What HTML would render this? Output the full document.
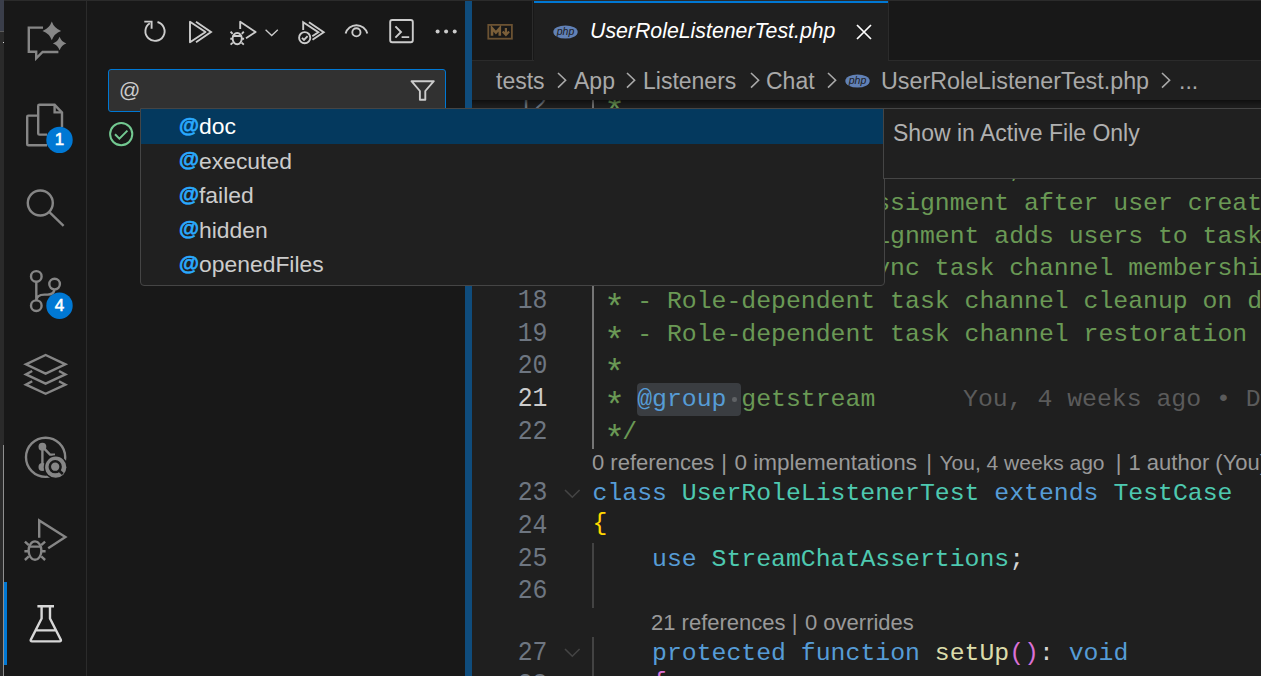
<!DOCTYPE html>
<html><head><meta charset="utf-8">
<style>
*{margin:0;padding:0;box-sizing:border-box}
html,body{width:1261px;height:676px;overflow:hidden;background:#181818}
body{position:relative;font-family:"Liberation Sans",sans-serif;color:#cccccc}
.a{position:absolute}
.mono{font-family:"Liberation Mono",monospace}
svg{position:absolute;overflow:visible}
.ln{transform-origin:0 23px;transform:scaleY(1.09);position:absolute;left:481.5px;width:66px;text-align:right;color:#6e7681;font-family:"Liberation Mono",monospace;font-size:24.8px;height:32.7px;line-height:32.7px;white-space:pre}
.cl{position:absolute;left:592.5px;font-family:"Liberation Mono",monospace;font-size:24.8px;height:32.7px;line-height:32.7px;white-space:pre;color:#d4d4d4}
.cm{color:#6a9955}.ast{font-style:normal;display:inline-block;width:14.88px;transform:translateY(8.6px) scale(1.42)}.kw{color:#569cd6}.ty{color:#4ec9b0}.fn{color:#dcdcaa}.br1{color:#ffd700;position:relative;top:-3px}.br2{color:#da70d6}.br3{color:#da70d6;position:relative;top:-3px}
.lens{position:absolute;font-size:22px;color:#999999;white-space:pre;line-height:28.8px;height:28.8px}
.sg{position:absolute;left:141px;width:742px;height:34.56px;line-height:34.56px;font-size:22.9px;padding-left:38px;color:#cccccc;white-space:pre}
.sg b{font-weight:bold;color:#2aaaff;font-size:20.5px;position:relative;top:-2.3px;-webkit-text-stroke:0.6px #2aaaff}
</style></head><body>
<!-- left outside strip -->
<div class="a" style="left:0;top:0;width:4px;height:31px;background:#3a3e4a"></div>
<div class="a" style="left:0;top:31px;width:4px;height:1px;background:#5a5a5a"></div>
<div class="a" style="left:0;top:32px;width:4px;height:644px;background:#2a2a2a"></div>
<div class="a" style="left:2.6px;top:41.8px;width:1.5px;height:1.5px;background:#d8d8d8"></div>
<div class="a" style="left:3px;top:445px;width:1px;height:231px;background:#8f8f8f"></div>
<!-- top border -->
<div class="a" style="left:4px;top:0;width:1257px;height:1px;background:#2b2b2b"></div>
<!-- activity bar -->
<div class="a" style="left:4px;top:1px;width:82px;height:675px;background:#181818"></div>
<div class="a" style="left:86px;top:1px;width:1px;height:675px;background:#2b2b2b"></div>
<div class="a" style="left:4px;top:582px;width:3px;height:83px;background:#0078d4"></div>
<!-- sidebar -->
<div class="a" style="left:87px;top:1px;width:378px;height:675px;background:#181818"></div>
<!-- sash -->
<div class="a" style="left:465px;top:1px;width:7px;height:675px;background:#0f4c7c"></div>
<!-- editor -->
<div class="a" style="left:472px;top:1px;width:789px;height:675px;background:#1f1f1f"></div>
<!-- tab bar -->
<div class="a" style="left:472px;top:1px;width:789px;height:60px;background:#181818;border-bottom:1px solid #2b2b2b"></div>
<div class="a" style="left:472px;top:1px;width:61px;height:59px;background:#181818;border-right:1px solid #2b2b2b"></div>
<div class="a" style="left:534px;top:1px;width:354px;height:60px;background:#1f1f1f"></div>
<div class="a" style="left:534px;top:1px;width:354px;height:2px;background:#0078d4"></div>
<div class="a" style="left:888px;top:1px;width:1px;height:59px;background:#2b2b2b"></div>
<!-- breadcrumbs -->
<div class="a" style="left:472px;top:61px;width:789px;height:39px;background:#1f1f1f"></div>

<div class="a" style="left:472px;top:100px;width:789px;height:576px;overflow:hidden">
<div class="a" style="left:-472px;top:-100px;width:1261px;height:676px">
<div class="a" style="left:592px;top:88px;width:2px;height:360.5px;background:#757575"></div>
<div class="a" style="left:592px;top:542.6px;width:2px;height:65.4px;background:#434343"></div>
<div class="a" style="left:592px;top:636.5px;width:2px;height:75.4px;background:#434343"></div>
<div class="a" style="left:637px;top:383.1px;width:104px;height:32.7px;background:#3a3d41;border-radius:4px"></div>
<div class="ln" style="top:88.8px">12</div>
<div class="cl" style="top:88.8px"><span class="cm"> <i class="ast">*</i></span></div>
<div class="ln" style="top:121.5px">13</div>
<div class="cl" style="top:121.5px"><span class="cm"> <i class="ast">*</i> This test verifies the role listener handles:</span></div>
<div class="ln" style="top:154.2px">14</div>
<div class="cl" style="top:154.2px"><span class="cm"> <i class="ast">*</i> Test the UserRoleListener, events</span></div>
<div class="ln" style="top:186.9px">15</div>
<div class="cl" style="top:186.9px"><span class="cm"> <i class="ast">*</i> - Initial role assignment after user creation</span></div>
<div class="ln" style="top:219.6px">16</div>
<div class="cl" style="top:219.6px"><span class="cm"> <i class="ast">*</i> - Role-based assignment adds users to task channels</span></div>
<div class="ln" style="top:252.3px">17</div>
<div class="cl" style="top:252.3px"><span class="cm"> <i class="ast">*</i> - Role updates sync task channel membership</span></div>
<div class="ln" style="top:285.0px">18</div>
<div class="cl" style="top:285.0px"><span class="cm"> <i class="ast">*</i> - Role-dependent task channel cleanup on demotion</span></div>
<div class="ln" style="top:317.7px">19</div>
<div class="cl" style="top:317.7px"><span class="cm"> <i class="ast">*</i> - Role-dependent task channel restoration on promotion</span></div>
<div class="ln" style="top:350.4px">20</div>
<div class="cl" style="top:350.4px"><span class="cm"> <i class="ast">*</i></span></div>
<div class="ln" style="top:383.1px;color:#cccccc">21</div>
<div class="cl" style="top:383.1px"><span class="cm"> <i class="ast">*</i> </span><span class="kw">@group</span><span class="cm"> getstream</span></div>
<div class="ln" style="top:415.8px">22</div>
<div class="cl" style="top:415.8px"><span class="cm"> <i class="ast">*</i>/</span></div>
<div class="ln" style="top:477.2px">23</div>
<div class="cl" style="top:477.2px"><span class="kw">class</span> <span class="ty">UserRoleListenerTest</span> <span class="kw">extends</span> <span class="ty">TestCase</span></div>
<div class="ln" style="top:509.9px">24</div>
<div class="cl" style="top:509.9px"><span class="br1">{</span></div>
<div class="ln" style="top:542.6px">25</div>
<div class="cl" style="top:542.6px">    <span class="kw">use</span> <span class="ty">StreamChatAssertions</span>;</div>
<div class="ln" style="top:575.3px">26</div>
<div class="cl" style="top:575.3px"></div>
<div class="ln" style="top:636.5px">27</div>
<div class="cl" style="top:636.5px">    <span class="kw">protected</span> <span class="kw">function</span> <span class="fn">setUp</span><span class="br2">()</span>: <span class="kw">void</span></div>
<div class="ln" style="top:669.2px">28</div>
<div class="cl" style="top:669.2px">    <span class="br3">{</span></div>
<div class="a" style="left:732px;top:397.1px;width:4.6px;height:4.6px;border-radius:50%;background:#5f6265"></div>
<div class="cl" style="left:963px;top:383.1px;color:#5b5b5b">You, 4 weeks ago • Docs: add group annotation</div>
<div class="lens" style="left:592px;top:448.5px">0 references</div><div class="lens" style="left:721.3px;top:448.5px">|</div><div class="lens" style="left:734.5px;top:448.5px;font-size:22.5px">0 implementations</div><div class="lens" style="left:926.3px;top:448.5px">|</div><div class="lens" style="left:939.5px;top:448.5px;font-size:21px">You, 4 weeks ago</div><div class="lens" style="left:1115.8px;top:448.5px">|</div><div class="lens" style="left:1128.5px;top:448.5px">1 author (You)</div>
<div class="lens" style="left:651px;top:609.0px">21 references</div><div class="lens" style="left:791.8px;top:609.0px">|</div><div class="lens" style="left:805px;top:609.0px">0 overrides</div>
<svg width="17" height="9" style="left:564px;top:488.7px"><path d="M1 1 L8.3 8.2 L15.6 1" fill="none" stroke="#444444" stroke-width="1.6"/></svg>
<svg width="17" height="9" style="left:564px;top:648.0px"><path d="M1 1 L8.3 8.2 L15.6 1" fill="none" stroke="#444444" stroke-width="1.6"/></svg>
<div class="a" style="left:472px;top:100px;width:789px;height:12px;box-shadow:inset 0 10px 10px -10px #000"></div>
</div></div>
<svg width="1" height="1" style="left:0;top:0"><rect x="488.3" y="24.9" width="23.6" height="13.8" fill="none" stroke="#6b5232" stroke-width="1.8"/><path d="M492 35.8 V28.2 L495.9 32.6 L499.8 28.2 V35.8" fill="none" stroke="#7b5f39" stroke-width="2.6" stroke-linejoin="miter"/><path d="M505.9 28 V35 M502.7 31.6 L505.9 35 L509.1 31.6" fill="none" stroke="#7b5f39" stroke-width="2.2"/></svg>
<svg width="26" height="14" style="left:553px;top:24.5px"><ellipse cx="12.5" cy="7" rx="12.2" ry="6.6" fill="#6181b6"/><text x="12.5" y="10.4" text-anchor="middle" font-family="Liberation Sans" font-style="italic" font-size="10.5" fill="#1b1b1b">php</text></svg>
<div class="a" style="left:590px;top:16px;height:30px;line-height:30px;font-size:21.3px;font-style:italic;color:#ffffff;white-space:pre">UserRoleListenerTest.php</div>
<svg width="16" height="16" style="left:856px;top:23.5px"><path d="M1 1 L15 15 M15 1 L1 15" stroke="#ffffff" stroke-width="1.7"/></svg>
<div class="a" style="left:496px;top:62px;height:38px;line-height:38px;font-size:23px;color:#a9a9a9;white-space:pre">tests</div>
<svg width="10" height="17" style="left:557px;top:72px"><path d="M1 1 L8.6 8.2 L1 15.6" fill="none" stroke="#a9a9a9" stroke-width="1.6"/></svg>
<div class="a" style="left:574px;top:62px;height:38px;line-height:38px;font-size:23px;color:#a9a9a9;white-space:pre">App</div>
<svg width="10" height="17" style="left:626px;top:72px"><path d="M1 1 L8.6 8.2 L1 15.6" fill="none" stroke="#a9a9a9" stroke-width="1.6"/></svg>
<div class="a" style="left:643px;top:62px;height:38px;line-height:38px;font-size:23px;color:#a9a9a9;white-space:pre">Listeners</div>
<svg width="10" height="17" style="left:750px;top:72px"><path d="M1 1 L8.6 8.2 L1 15.6" fill="none" stroke="#a9a9a9" stroke-width="1.6"/></svg>
<div class="a" style="left:766px;top:62px;height:38px;line-height:38px;font-size:23px;color:#a9a9a9;white-space:pre">Chat</div>
<svg width="10" height="17" style="left:827px;top:72px"><path d="M1 1 L8.6 8.2 L1 15.6" fill="none" stroke="#a9a9a9" stroke-width="1.6"/></svg>
<svg width="26" height="14" style="left:845px;top:73.5px"><ellipse cx="12.5" cy="7" rx="12.2" ry="6.6" fill="#6181b6"/><text x="12.5" y="10.4" text-anchor="middle" font-family="Liberation Sans" font-style="italic" font-size="10.5" fill="#1b1b1b">php</text></svg>
<div class="a" style="left:881px;top:62px;height:38px;line-height:38px;font-size:23.3px;color:#a9a9a9;white-space:pre">UserRoleListenerTest.php</div>
<svg width="10" height="17" style="left:1161px;top:72px"><path d="M1 1 L8.6 8.2 L1 15.6" fill="none" stroke="#a9a9a9" stroke-width="1.6"/></svg>
<div class="a" style="left:1179px;top:62px;height:38px;line-height:38px;font-size:23px;color:#a9a9a9;white-space:pre">...</div>
<div class="a" style="left:108px;top:69px;width:338px;height:43px;background:#313131;border:1px solid #0078d4;border-radius:3px"></div>
<div class="a" style="left:119px;top:68.5px;height:41px;line-height:41px;font-size:21px;color:#cccccc">@</div>
<svg width="26" height="22" style="left:410px;top:80px"><path d="M1.5 1.2 H23.8 L15.3 11 V19.8 H9.9 V11 Z" fill="none" stroke="#cccccc" stroke-width="1.9" stroke-linejoin="round"/></svg>
<svg width="26" height="26" style="left:108px;top:121px"><circle cx="13.2" cy="13.1" r="11.1" fill="none" stroke="#73c991" stroke-width="2"/><path d="M7 13.2 L11.4 17.6 L19.4 9.6" fill="none" stroke="#73c991" stroke-width="2"/></svg>
<div class="a" style="left:140px;top:108px;width:745px;height:178px;background:#202020;border:1px solid #454545;border-radius:0 0 4px 4px"></div>
<div class="a" style="left:141px;top:109px;width:742px;height:34.56px;background:#04395e"></div>
<div class="sg" style="top:109.00px;color:#ffffff"><b>@</b>doc</div>
<div class="sg" style="top:143.56px;color:#cccccc"><b>@</b>executed</div>
<div class="sg" style="top:178.12px;color:#cccccc"><b>@</b>failed</div>
<div class="sg" style="top:212.68px;color:#cccccc"><b>@</b>hidden</div>
<div class="sg" style="top:247.24px;color:#cccccc"><b>@</b>openedFiles</div>
<div class="a" style="left:883px;top:108px;width:390px;height:71px;background:#202020;border:1px solid #454545"></div>
<div class="a" style="left:893px;top:116px;height:34px;line-height:34px;font-size:23px;color:#b0b0b0;white-space:pre">Show in Active File Only</div>
<svg width="1261" height="676" style="left:0;top:0">
<path d="M149.8 23.2 A9.6 9.6 0 1 0 157.5 22" stroke="#cccccc" stroke-width="1.9" fill="none"/><path d="M144.3 21.6 H151.6 V28.8" stroke="#cccccc" stroke-width="1.9" fill="none"/>
<path d="M190 21.8 V42.2 L205.5 32 Z" stroke="#cccccc" stroke-width="1.9" fill="none" stroke-linejoin="round"/><path d="M196 21.8 L211 32 L196 42.2" stroke="#cccccc" stroke-width="1.9" fill="none"/>
<path d="M240.2 29 V21.8 L255.6 32 L246 38.3" stroke="#cccccc" stroke-width="1.9" fill="none" stroke-linejoin="round"/>
<ellipse cx="237.2" cy="38.6" rx="4.6" ry="5.6" stroke="#cccccc" stroke-width="1.9" fill="none" stroke-width="1.7"/><path d="M232.6 36 H241.8 M232.6 33.8 L230.6 31.6 M241.8 33.8 L243.8 31.6 M232.6 38.8 H230.3 M241.8 38.8 H244.1 M232.8 42.6 L230.6 44.6 M241.6 42.6 L243.8 44.6" stroke="#cccccc" stroke-width="1.9" fill="none" stroke-width="1.6"/>
<path d="M265.6 29.7 L271.7 35.5 L277.8 29.7" stroke="#cccccc" fill="none" stroke-width="1.3"/>
<path d="M303.2 30 V22.2 L318.3 32.2 L312.3 36.2 M309 22.2 L323.7 32.2 L312.5 39.8" stroke="#cccccc" stroke-width="1.9" fill="none"/>
<circle cx="304.7" cy="37.7" r="5.6" stroke="#cccccc" stroke-width="1.9" fill="none" stroke-width="1.7"/><path d="M302 37.9 L304 39.9 L307.6 36.2" stroke="#cccccc" stroke-width="1.9" fill="none" stroke-width="1.6"/>
<path d="M345.6 33.6 A11.2 11.2 0 0 1 367.3 33.6" stroke="#cccccc" stroke-width="1.9" fill="none"/><circle cx="356.4" cy="32.3" r="4.1" stroke="#cccccc" stroke-width="1.9" fill="none"/>
<rect x="390.2" y="20" width="22.6" height="22.2" rx="2" stroke="#cccccc" stroke-width="1.9" fill="none"/><path d="M395.4 26.4 L401 32 L395.4 37.6 M401.6 37.1 H409.2" stroke="#cccccc" stroke-width="1.9" fill="none"/>
<circle cx="437.6" cy="31.4" r="2" fill="#cccccc"/>
<circle cx="446.1" cy="31.4" r="2" fill="#cccccc"/>
<circle cx="454.7" cy="31.4" r="2" fill="#cccccc"/>
<path d="M43 27.6 H28.8 V51.8 H36.2 V58.4 L42.6 52 H58.4" stroke="#868686" stroke-width="2.4" fill="none" stroke-linejoin="miter"/>
<path d="M51.8 21.599999999999998 Q54.199999999999996 28.5 61.099999999999994 30.9 Q54.199999999999996 33.3 51.8 40.2 Q49.4 33.3 42.5 30.9 Q49.4 28.5 51.8 21.599999999999998Z" fill="#868686"/><path d="M59.6 36.8 Q61.4 41.7 66.3 43.5 Q61.4 45.3 59.6 50.2 Q57.800000000000004 45.3 52.9 43.5 Q57.800000000000004 41.7 59.6 36.8Z" fill="#868686"/>
<path d="M37.5 115.6 H28.3 Q27.2 115.6 27.2 116.8 V144.2 Q27.2 145.2 28.3 145.2 H47" stroke="#868686" stroke-width="2.4" fill="none"/>
<path d="M47 134.6 H39.4 Q38.2 134.6 38.2 133.4 V106 Q38.2 104.8 39.4 104.8 H54.6 L62 112.4 V127" stroke="#868686" stroke-width="2.4" fill="none"/><path d="M54.6 105 V112.4 H62" stroke="#868686" stroke-width="2.4" fill="none"/>
<circle cx="40.3" cy="203" r="12.5" stroke="#868686" stroke-width="2.4" fill="none" stroke-width="2.6"/><path d="M49.4 212.1 L63.6 225.8" stroke="#868686" stroke-width="2.4" fill="none" stroke-width="2.6"/>
<circle cx="36.3" cy="276.4" r="5.3" stroke="#868686" stroke-width="2.4" fill="none"/><circle cx="54.6" cy="284.1" r="5.3" stroke="#868686" stroke-width="2.4" fill="none"/><circle cx="36.3" cy="305.7" r="5.3" stroke="#868686" stroke-width="2.4" fill="none"/><path d="M36.3 281.7 V300.4 M36.3 301 C36.3 296.5 39.5 294.6 44.5 294.6 H47.5 C51.5 294.6 54.3 292.8 54.4 289.4" stroke="#868686" stroke-width="2.4" fill="none"/>
<path d="M25.9 364.3 L45.6 355 L65.4 364.3 L45.6 373.6 Z" stroke="#868686" stroke-width="2.4" fill="none" stroke-width="2.5" stroke-linejoin="miter"/>
<path d="M32.2 371 L25.9 374.4 L45.6 383.6 L65.4 374.4 L59 371 M32.2 381.2 L25.9 384.6 L45.6 393.8 L65.4 384.6 L59 381.2" stroke="#868686" stroke-width="2.4" fill="none" stroke-width="2.5"/>
<circle cx="45.6" cy="457.3" r="19.6" stroke="#868686" stroke-width="2.4" fill="none" stroke-width="2.2"/><circle cx="42.4" cy="446.7" r="3.9" fill="#868686"/><circle cx="42.4" cy="467" r="3.9" fill="#868686"/><path d="M42.4 447 V467 M42.4 446.7 L50 454.6 H55" stroke="#868686" stroke-width="2.4" fill="none" stroke-width="2.2"/>
<circle cx="55.75" cy="467.2" r="12" fill="#181818"/><circle cx="55.75" cy="467.2" r="10.6" fill="#868686"/><circle cx="55.2" cy="466.7" r="5.4" fill="none" stroke="#181818" stroke-width="2.5"/><path d="M58.8 470.3 L62.8 474" stroke="#181818" stroke-width="2.6"/>
<path d="M39.2 537.8 V520.4 L65.4 537 L48.2 548.2" stroke="#868686" stroke-width="2.4" fill="none" stroke-width="2.3"/>
<ellipse cx="35" cy="550.6" rx="6.4" ry="9.2" stroke="#868686" stroke-width="2.4" fill="none" stroke-width="2.3"/><path d="M28.8 546.6 H41.2 M28.8 545.2 L24.9 541.6 M41.2 545.2 L45.1 541.6 M28.4 551.2 H24.4 M41.6 551.2 H45.6 M28.8 556.4 L24.9 560 M41.2 556.4 L45.1 560" stroke="#868686" stroke-width="2.4" fill="none" stroke-width="2.2"/>
<path d="M37.4 606.2 H54 M41.6 606.5 V618.5 L30.8 639.6 Q30.2 641.4 32 641.4 H59.6 Q61.4 641.4 60.8 639.6 L50 618.5 V606.5 M35.6 630.4 H56" stroke="#d7d7d7" stroke-width="2.4" fill="none"/>
<circle cx="59.5" cy="139.9" r="13.2" fill="#0078d4"/><circle cx="59.5" cy="305.7" r="13.2" fill="#0078d4"/>
</svg>
<div class="a" style="left:46px;top:127px;width:27px;height:26px;line-height:26px;text-align:center;font-size:17px;font-weight:normal;-webkit-text-stroke:0.55px #fff;color:#fff">1</div>
<div class="a" style="left:46px;top:293px;width:27px;height:26px;line-height:26px;text-align:center;font-size:17px;font-weight:normal;-webkit-text-stroke:0.55px #fff;color:#fff">4</div>
</body></html>
